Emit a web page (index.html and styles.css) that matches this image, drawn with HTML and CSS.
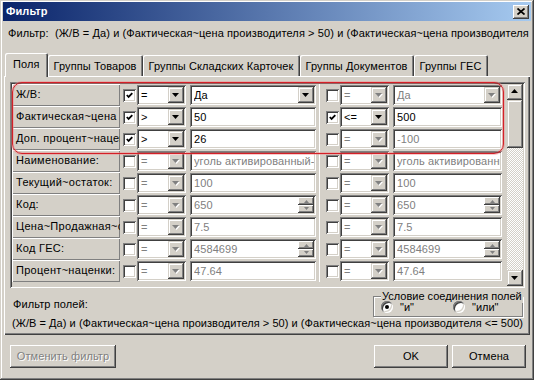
FILE: index.html
```html
<!DOCTYPE html>
<html lang="ru">
<head>
<meta charset="utf-8">
<title>Фильтр</title>
<link rel="stylesheet" href="styles.css">
</head>
<body>
<div class="window">
  <div class="titlebar">
    <span class="title">Фильтр</span>
    <span class="close"><svg width="8" height="7" viewBox="0 0 8 7"><path d="M0.5 0.5 L7.5 6.5 M7.5 0.5 L0.5 6.5" stroke="#000" stroke-width="1.7"/></svg></span>
  </div>
  <div class="filter-line">Фильтр:&nbsp; (Ж/В = Да) и (Фактическая~цена производителя &gt; 50) и (Фактическая~цена производителя &lt;= 500)</div>
  <div class="tabs">
    <div class="tab active">Поля</div>
    <div class="tab">Группы Товаров</div>
    <div class="tab">Группы Складских Карточек</div>
    <div class="tab">Группы Документов</div>
    <div class="tab">Группы ГЕС</div>
  </div>
  <div class="panel">
    <div class="grid">
      <div class="rows">
        <div class="row">
          <div class="label">Ж/В:</div>
          <span class="chk"><svg width="7" height="7" viewBox="0 0 7 7"><path d="M0.8 3 L2.6 5 L6.3 1.2" fill="none" stroke="#000" stroke-width="1.8"/></svg></span>
          <div class="combo"><span class="txt">=</span><span class="btn"></span></div>
          <div class="field wide"><span class="txt">Да</span><span class="btn"></span></div>
          <span class="sep"></span>
          <span class="chk"></span>
          <div class="combo dis"><span class="txt">=</span><span class="btn"></span></div>
          <div class="field narrow dis"><span class="txt">Да</span><span class="btn"></span></div>
        </div>
        <div class="row">
          <div class="label">Фактическая~цена производителя:</div>
          <span class="chk"><svg width="7" height="7" viewBox="0 0 7 7"><path d="M0.8 3 L2.6 5 L6.3 1.2" fill="none" stroke="#000" stroke-width="1.8"/></svg></span>
          <div class="combo"><span class="txt">&gt;</span><span class="btn"></span></div>
          <div class="field wide"><span class="txt">50</span></div>
          <span class="sep"></span>
          <span class="chk"><svg width="7" height="7" viewBox="0 0 7 7"><path d="M0.8 3 L2.6 5 L6.3 1.2" fill="none" stroke="#000" stroke-width="1.8"/></svg></span>
          <div class="combo"><span class="txt">&lt;=</span><span class="btn"></span></div>
          <div class="field narrow"><span class="txt">500</span></div>
        </div>
        <div class="row">
          <div class="label">Доп. процент~наценки:</div>
          <span class="chk"><svg width="7" height="7" viewBox="0 0 7 7"><path d="M0.8 3 L2.6 5 L6.3 1.2" fill="none" stroke="#000" stroke-width="1.8"/></svg></span>
          <div class="combo"><span class="txt">&gt;</span><span class="btn"></span></div>
          <div class="field wide"><span class="txt">26</span></div>
          <span class="sep"></span>
          <span class="chk"></span>
          <div class="combo dis"><span class="txt">=</span><span class="btn"></span></div>
          <div class="field narrow dis"><span class="txt">-100</span></div>
        </div>
        <div class="row">
          <div class="label">Наименование:</div>
          <span class="chk"></span>
          <div class="combo dis"><span class="txt">=</span><span class="btn"></span></div>
          <div class="field wide dis"><span class="txt">уголь активированный-</span></div>
          <span class="sep"></span>
          <span class="chk"></span>
          <div class="combo dis"><span class="txt">=</span><span class="btn"></span></div>
          <div class="field narrow dis"><span class="txt">уголь активированный-</span></div>
        </div>
        <div class="row">
          <div class="label">Текущий~остаток:</div>
          <span class="chk"></span>
          <div class="combo dis"><span class="txt">=</span><span class="btn"></span></div>
          <div class="field wide dis"><span class="txt">100</span></div>
          <span class="sep"></span>
          <span class="chk"></span>
          <div class="combo dis"><span class="txt">=</span><span class="btn"></span></div>
          <div class="field narrow dis"><span class="txt">100</span></div>
        </div>
        <div class="row">
          <div class="label">Код:</div>
          <span class="chk"></span>
          <div class="combo dis"><span class="txt">=</span><span class="btn"></span></div>
          <div class="field wide dis"><span class="txt">650</span><span class="spin"><i class="sb"></i><i class="sb dn"></i></span></div>
          <span class="sep"></span>
          <span class="chk"></span>
          <div class="combo dis"><span class="txt">=</span><span class="btn"></span></div>
          <div class="field narrow dis"><span class="txt">650</span><span class="spin"><i class="sb"></i><i class="sb dn"></i></span></div>
        </div>
        <div class="row">
          <div class="label">Цена~Продажная~с НДС:</div>
          <span class="chk"></span>
          <div class="combo dis"><span class="txt">=</span><span class="btn"></span></div>
          <div class="field wide dis"><span class="txt">7.5</span></div>
          <span class="sep"></span>
          <span class="chk"></span>
          <div class="combo dis"><span class="txt">=</span><span class="btn"></span></div>
          <div class="field narrow dis"><span class="txt">7.5</span></div>
        </div>
        <div class="row">
          <div class="label">Код ГЕС:</div>
          <span class="chk"></span>
          <div class="combo dis"><span class="txt">=</span><span class="btn"></span></div>
          <div class="field wide dis"><span class="txt">4584699</span><span class="spin"><i class="sb"></i><i class="sb dn"></i></span></div>
          <span class="sep"></span>
          <span class="chk"></span>
          <div class="combo dis"><span class="txt">=</span><span class="btn"></span></div>
          <div class="field narrow dis"><span class="txt">4584699</span><span class="spin"><i class="sb"></i><i class="sb dn"></i></span></div>
        </div>
        <div class="row">
          <div class="label">Процент~наценки:</div>
          <span class="chk"></span>
          <div class="combo dis"><span class="txt">=</span><span class="btn"></span></div>
          <div class="field wide dis"><span class="txt">47.64</span></div>
          <span class="sep"></span>
          <span class="chk"></span>
          <div class="combo dis"><span class="txt">=</span><span class="btn"></span></div>
          <div class="field narrow dis"><span class="txt">47.64</span></div>
        </div>
      </div>
      <div class="scrollbar">
        <span class="sbtn up"></span>
        <span class="thumb"></span>
        <span class="track"></span>
        <span class="sbtn down"></span>
      </div>
      <div class="highlight"></div>
    </div>
    <div class="summary">
      <div class="summary-top">
        <div class="summary-label">Фильтр полей:</div>
        <div class="group">
          <span class="legend">Условие соединения полей</span>
          <div class="radios">
            <label class="radio-item first"><span class="radio checked"></span>"и"</label>
            <label class="radio-item"><span class="radio"></span>"или"</label>
          </div>
        </div>
      </div>
      <div class="summary-text">(Ж/В = Да) и (Фактическая~цена производителя &gt; 50) и (Фактическая~цена производителя &lt;= 500)</div>
    </div>
  </div>
  <div class="buttons">
    <button class="btn-win disabled" type="button">Отменить фильтр</button>
    <button class="btn-win ok" type="button">OK</button>
    <button class="btn-win cancel" type="button">Отмена</button>
  </div>
</div>
</body>
</html>
```
FILE: styles.css
```css
* { box-sizing: border-box; }
html, body { margin: 0; padding: 0; }
body {
  width: 534px; height: 380px; overflow: hidden;
  font-family: "Liberation Sans", Arial, sans-serif;
  font-size: 11px; line-height: 13px; color: #000;
  letter-spacing: 0.1px;
  background: #d4d0c8;
}
.window {
  width: 534px; height: 380px;
  background: #d4d0c8;
  padding: 2px 3px 3px;
  display: flex; flex-direction: column;
  box-shadow: inset -1px -1px #404040, inset 1px 1px #d4d0c8, inset -2px -2px #808080, inset 2px 2px #fff;
}
.titlebar {
  height: 19px; flex: none;
  display: flex; align-items: center; justify-content: space-between;
  padding: 0 2px 0 3px;
  background: linear-gradient(to right, #0a246a, #a6caf0);
  color: #fff; font-weight: bold;
}
.close {
  width: 16px; height: 14px;
  display: flex; align-items: center; justify-content: center;
  background: #d4d0c8;
  box-shadow: inset -1px -1px #404040, inset 1px 1px #fff, inset -2px -2px #808080;
}
.filter-line {
  margin-top: 6px; padding-left: 5px;
  white-space: nowrap; overflow: hidden; flex: none;
}
.tabs {
  margin-top: 13px; height: 23px; flex: none;
  display: flex; align-items: flex-end;
  padding-left: 2px;
  position: relative; z-index: 1;
  letter-spacing: 0.1px;
}
.tab {
  height: 21px; padding: 2px 6px 0;
  display: flex; align-items: center; white-space: nowrap;
  background: #d4d0c8;
  border-radius: 2px 2px 0 0;
  box-shadow: inset 1px 1px #fff, inset -1px 0 #404040, inset -2px 0 #808080;
}
.tab.active {
  height: 24px; margin-bottom: -1px; padding: 0 8px 1px;
}
.panel {
  margin: 0 1px; height: 259px; flex: none;
  padding: 6px 5px 0 6px;
  box-shadow: inset 1px 1px #fff, inset -1px -1px #404040, inset -2px -2px #808080;
}
.grid {
  position: relative;
  width: 515px; height: 206px;
  padding: 2px;
  display: flex;
  background: #d4d0c8;
  box-shadow: inset 1px 1px #808080, inset -1px -1px #fff, inset 2px 2px #404040, inset -2px -2px #d4d0c8;
}
.rows { width: 495px; display: flex; flex-direction: column; overflow: hidden; }
.row { height: 22px; flex: none; display: flex; align-items: center; }
.label {
  width: 108px; height: 22px; flex: none;
  padding: 4px 0 0 4px;
  white-space: nowrap; overflow: hidden;
  letter-spacing: 0.3px;
  box-shadow: inset 1px 1px #fff, inset -1px -1px #808080;
}
.chk {
  width: 13px; height: 13px; flex: none; margin-left: 3px;
  display: flex; align-items: center; justify-content: center;
  background: #fff;
  box-shadow: inset 1px 1px #808080, inset -1px -1px #fff, inset 2px 2px #404040, inset -2px -2px #d4d0c8;
}
.combo, .field {
  position: relative; height: 20px; flex: none;
  display: flex; align-items: center;
  background: #fff;
  padding: 2px 2px 2px 4px;
  white-space: nowrap; overflow: hidden;
  box-shadow: inset 1px 1px #808080, inset -1px -1px #fff, inset 2px 2px #404040, inset -2px -2px #d4d0c8;
}
.combo { width: 49px; margin-left: 1px; }
.field.wide { width: 126px; margin-left: 4px; }
.field.narrow { width: 109px; margin-left: 4px; }
.txt { flex: 1; overflow: hidden; padding-top: 1px; }
.dis .txt { color: #808080; }
.btn, .sbtn {
  position: relative; flex: none;
  width: 16px; height: 16px;
  background: #d4d0c8;
  box-shadow: inset -1px -1px #404040, inset 1px 1px #d4d0c8, inset -2px -2px #808080, inset 2px 2px #fff;
}
.btn::before, .btn::after, .sbtn::after {
  content: ""; position: absolute;
  left: 4px; top: 6px; width: 7px; height: 4px;
  background: #000;
  clip-path: polygon(0 0, 100% 0, 50% 100%);
}
.btn::before { display: none; }
.dis .btn::before { display: block; background: #fff; left: 5px; top: 7px; }
.dis .btn::after { background: #808080; }
.spin {
  flex: none; width: 16px; height: 16px;
  display: flex; flex-direction: column;
}
.sb {
  position: relative; height: 8px;
  background: #d4d0c8;
  box-shadow: inset -1px -1px #404040, inset 1px 1px #fff, inset -2px -2px #808080;
}
.sb::after {
  content: ""; position: absolute;
  left: 6px; top: 3px; width: 5px; height: 3px;
  background: #808080;
  clip-path: polygon(50% 0, 100% 100%, 0 100%);
}
.sb.dn::after { top: 2px; clip-path: polygon(0 0, 100% 0, 50% 100%); }
.sep {
  width: 7px; height: 22px; flex: none;
  display: flex; justify-content: center;
  box-shadow: inset 3px 0 #d4d0c8, inset -3px 0 #d4d0c8, inset 4px 0 #fff;
  background: #808080;
}
.scrollbar {
  width: 16px; flex: none;
  display: flex; flex-direction: column;
  background-color: #d4d0c8;
  background-image: repeating-conic-gradient(#fff 0 25%, #d4d0c8 0 50%);
  background-size: 2px 2px;
}
.sbtn.up::after { clip-path: polygon(50% 0, 100% 100%, 0 100%); top: 5px; }
.thumb {
  height: 48px; flex: none;
  background: #d4d0c8;
  box-shadow: inset -1px -1px #404040, inset 1px 1px #d4d0c8, inset -2px -2px #808080, inset 2px 2px #fff;
}
.track { flex: 1; }
.highlight {
  position: absolute;
  left: 2px; top: 0; width: 492px; height: 72px;
  border: 1px solid #d42028;
  border-radius: 10px;
  box-shadow: 0 0 0 1px rgba(240, 140, 140, 0.45), inset 0 0 0 1px rgba(240, 140, 140, 0.45);
  pointer-events: none;
}
.summary { display: flex; flex-direction: column; }
.summary-top { display: flex; margin-top: 1px; height: 27px; }
.summary-label { padding: 9px 0 0 3px; }
.group {
  margin: 7px 2px 0 auto;
  width: 150px; height: 21px;
  padding: 0 7px;
  border: 1px solid #808080;
  box-shadow: inset 1px 1px #fff, 1px 1px #fff;
  letter-spacing: 0;
}
.legend {
  display: block; width: max-content;
  margin-top: -7px; padding: 0 1px;
  background: #d4d0c8;
}
.radios { display: flex; height: 12px; margin-top: -2px; }
.radio-item { display: flex; align-items: center; gap: 7px; }
.radio-item.first { width: 72px; }
.radio {
  width: 12px; height: 12px; border-radius: 50%;
  background: #fff; flex: none;
  display: flex; align-items: center; justify-content: center;
  box-shadow: inset 1px 1px #808080, inset -1px -1px #fff, inset 2px 2px #404040, inset -2px -2px #d4d0c8;
}
.radio.checked::after {
  content: ""; width: 4px; height: 4px; border-radius: 50%; background: #000;
}
.summary-text {
  margin-top: 1px; padding-left: 2px;
  white-space: nowrap; overflow: hidden;
  letter-spacing: 0.05px;
}
.buttons {
  margin-top: 10px; padding-left: 7px;
  display: flex; flex: none;
}
.btn-win {
  height: 23px; padding: 0;
  font: inherit; letter-spacing: inherit; color: #000;
  border: none; background: #d4d0c8;
  box-shadow: inset -1px -1px #404040, inset 1px 1px #fff, inset -2px -2px #808080, inset 2px 2px #d4d0c8;
}
.btn-win.disabled { width: 106px; color: #808080; text-shadow: 1px 1px #fff; }
.btn-win.ok { width: 74px; margin-left: auto; }
.btn-win.cancel { width: 74px; margin-left: 4px; margin-right: 5px; }
```
